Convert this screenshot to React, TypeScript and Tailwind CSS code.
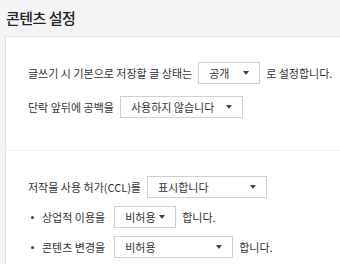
function Select({ label, width }: { label: string; width: string }) {
  return (
    <div className={`flex items-center justify-between h-[22px] ${width} border border-[#cdd1d6] bg-white pl-[10px] pr-[10px] text-[#333]`}>
      <span>{label}</span>
      <svg width="6" height="4" viewBox="0 0 6 4" className="shrink-0">
        <path d="M0 0H6L3 4Z" fill="#444" />
      </svg>
    </div>
  )
}

function Bullet() {
  return <span className="w-[3px] h-[3px] rounded-full bg-[#444] mr-[2px] ml-[3px]" />
}

export default function App() {
  return (
    <div className="w-[340px] h-[264px] overflow-hidden bg-[#f3f4f6] text-[#333] font-['Noto_Sans_CJK_KR','Noto_Sans',sans-serif]">
      <h1 className="h-[36px] pl-[6px] pt-[6px] text-[15px] leading-[24px] font-medium text-[#222] tracking-[-0.5px]">콘텐츠 설정</h1>

      <div className="ml-[5px] w-[400px] bg-white border-l border-t border-[#dde3ee] text-[11px]">
        <section className="pl-[22px] pt-[25px] pb-[32px] flex flex-col gap-[12px]">
          <div className="flex items-center gap-[6px]">
            <span>글쓰기 시 기본으로 저장할 글 상태는</span>
            <Select label="공개" width="w-[62px]" />
            <span>로 설정합니다.</span>
          </div>
          <div className="flex items-center gap-[6px]">
            <span>단락 앞뒤에 공백을</span>
            <Select label="사용하지 않습니다" width="w-[123px]" />
          </div>
        </section>

        <div className="h-px bg-[#eceef2]" />

        <section className="pl-[22px] pt-[25px] pb-[10px] flex flex-col gap-[8px]">
          <div className="flex items-center gap-[6px]">
            <span>저작물 사용 허가(CCL)를</span>
            <Select label="표시합니다" width="w-[120px]" />
          </div>
          <div className="flex items-center gap-[6px]">
            <Bullet />
            <span className="mr-[3px]">상업적 이용을</span>
            <Select label="비허용" width="w-[62px]" />
            <span>합니다.</span>
          </div>
          <div className="flex items-center gap-[6px]">
            <Bullet />
            <span className="mr-[3px]">콘텐츠 변경을</span>
            <Select label="비허용" width="w-[119px]" />
            <span>합니다.</span>
          </div>
        </section>
      </div>
    </div>
  )
}
